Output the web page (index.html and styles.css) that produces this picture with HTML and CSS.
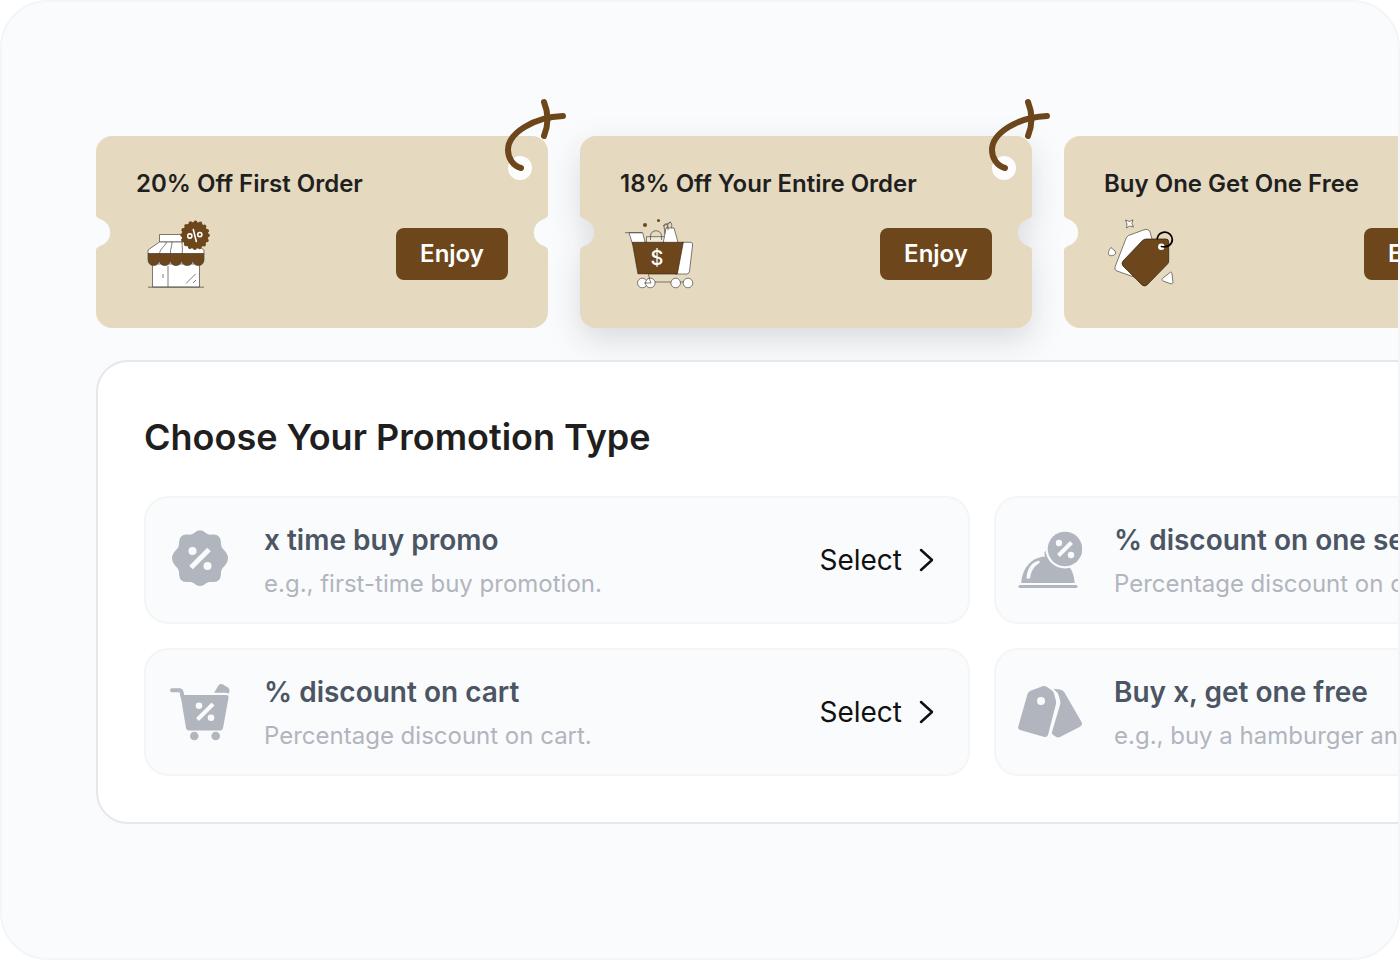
FILE: index.html
```html
<!DOCTYPE html>
<html lang="en">
  <head>
    <meta charset="UTF-8" />
    <title>Promotions</title>
    <link rel="stylesheet" href="styles.css">
  </head>
  <body>
    <!-- shapes shared by all tickets -->
    <svg class="defs" width="0" height="0" aria-hidden="true">
      <symbol id="ticket" viewBox="0 0 452 192">
        <path d="M16 0H436a16 16 0 0 1 16 16V79C452 81 450 82 448 83a14 14 0 0 0 0 27C450 111 452 112 452 114V176a16 16 0 0 1-16 16H16a16 16 0 0 1-16-16V114C0 112 2 111 4 110a14 14 0 0 0 0-27C2 82 0 81 0 79V16A16 16 0 0 1 16 0Z" fill="#e5d9bf" />
      </symbol>
      <symbol id="ribbon" viewBox="0 0 72 84">
        <circle cx="20" cy="72" r="12" fill="#fdfdfd" />
        <g fill="none" stroke="#6d461c" stroke-width="6" stroke-linecap="round">
          <path d="M21 72C13 70 8 62 8 54C8 37 34 21 63 20" />
          <path d="M44 6Q51 23 44 40" />
        </g>
      </symbol>
    </svg>

    <main class="frame">
      <section class="tickets">
        <article class="ticket">
          <svg class="ticket-shape" viewBox="0 0 452 192"><use href="#ticket" /></svg>
          <svg class="ticket-ribbon" viewBox="0 0 72 84"><use href="#ribbon" /></svg>
          <div class="ticket-body">
            <h2>20% Off First Order</h2>
            <div class="ticket-row">
              <svg class="ticket-icon" viewBox="0 0 80 80" fill="#fff" stroke="#4a453c" stroke-width="0.7">
                <path d="M16.5 50H63.5V73H16.5Z" />
                <path d="M32 52V73M12 73.2H68M27 60V64" fill="none" />
                <path d="M50 69.500L59.500 60M57 69L60 66" fill="none" />
                <path d="M23.5 20.500H52V28H23.5Z" />
                <path d="M23.5 28H57L68 36V40H12V36Z" />
                <path d="M30.5 28C29 33 24 34 23.5 40M36 28C36 33 34 35 34.5 40M46 28C46 33 47 35 46 40" fill="none" />
                <path d="M12 39.5H68V46A5.6 5.6 0 0 1 56.8 46A5.6 5.6 0 0 1 45.6 46A5.6 5.6 0 0 1 34.4 46A5.6 5.6 0 0 1 23.2 46A5.6 5.6 0 0 1 12 46Z" fill="#6d461c" />
                <circle cx="59" cy="21.3" r="13.300" fill="#6d461c" stroke="none" />
                <circle cx="59" cy="21.3" r="13" fill="none" stroke="#6d461c" stroke-width="3.6" stroke-linecap="round" stroke-dasharray="0.1 5.005" />
                <g fill="none" stroke="#fff" stroke-width="1.6">
                  <circle cx="53.8" cy="22" r="2.1" />
                  <circle cx="63.8" cy="20.600" r="2.1" />
                  <path d="M57.3 15.500L60.300 27.500" stroke-linecap="round" />
                </g>
              </svg>
              <button type="button" class="btn-enjoy">Enjoy</button>
            </div>
          </div>
        </article>

        <article class="ticket active">
          <svg class="ticket-shape" viewBox="0 0 452 192"><use href="#ticket" /></svg>
          <svg class="ticket-ribbon" viewBox="0 0 72 84"><use href="#ribbon" /></svg>
          <div class="ticket-body">
            <h2>18% Off Your Entire Order</h2>
            <div class="ticket-row">
              <svg class="ticket-icon" viewBox="0 0 80 80" fill="#fff" stroke="#4a453c" stroke-width="0.7">
                <circle cx="25" cy="11" r="2" fill="#6d461c" stroke="none" />
                <circle cx="38.5" cy="6.5" r="1.5" fill="#6d461c" stroke="none" />
                <path d="M26.5 22.7H44.5V30H26.5Z" fill="#efe9dc" />
                <path d="M30.5 26V22C30.5 15 41.5 15 41.5 22V26" fill="none" />
                <path d="M46 14H54L58.5 30H43Z" />
                <path d="M45 20L44 12C44 9 48 9 48 13V16M47 14C48 6 53 7 51.5 14M43 12L51 8" fill="none" />
                <path d="M9 18.7H22.7L25.5 30H12.5Z" />
                <path d="M5 18.7H22" fill="none" />
                <path d="M62 28.3H71Q73 28.5 72.6 31L69.5 57Q69 60 67 60H55Z" />
                <path d="M12.3 28.3H63.3L57.3 60H18Z" fill="#6d461c" stroke="#3d2a14" />
                <path d="M18 60.4L20 64H29L28.3 60.4Z" fill="#ecd5c2" stroke="none" />
                <path d="M28.3 60L30.5 68H68" fill="none" />
                <circle cx="22.3" cy="69" r="4.8" />
                <circle cx="30.3" cy="69" r="4.8" />
                <path d="M24 69H31L29 64" fill="none" />
                <circle cx="55.7" cy="69" r="4.8" />
                <circle cx="68" cy="69" r="4.8" />
                <text class="cart-sign" x="37" y="51" text-anchor="middle" stroke="none">$</text>
              </svg>
              <button type="button" class="btn-enjoy">Enjoy</button>
            </div>
          </div>
        </article>

        <article class="ticket">
          <svg class="ticket-shape" viewBox="0 0 452 192"><use href="#ticket" /></svg>
          <svg class="ticket-ribbon" viewBox="0 0 72 84"><use href="#ribbon" /></svg>
          <div class="ticket-body">
            <h2>Buy One Get One Free</h2>
            <div class="ticket-row">
              <svg class="ticket-icon" viewBox="0 0 80 80" fill="#fff" stroke="#4a453c" stroke-width="0.7" stroke-linejoin="round">
                <path d="M21.5 6L25.5 7.5L29 5.8L27.8 9.5L29.5 13L25.5 12L22.5 14L23 10Z" />
                <path d="M7 33.5C5 36 3.5 39 5 41C7 42.5 11 41.5 11.7 39C11.5 36 8.5 35.5 7 33.5Z" />
                <path d="M66 58.5C67 57.5 68 58.5 68 60L69 68C69 70 67.5 70 66 69.5L59 67C57.5 66 57.8 65 59 64Z" />
                <path d="M24.5 21.5L40 15.8Q44.5 14.5 46 18L50 32L30 63L13 57Q10 56 11 53L21 27Q22 23 24.5 21.5Z" />
                <path d="M42 25H62Q64.7 25 64.7 28V47Q64.7 49 63.5 50L43 71Q40.5 73 38 71L19 52Q17 49.5 19 47L38 27Q40 25 42 25Z" fill="#6d461c" stroke="#2b1c0b" />
                <circle cx="57.3" cy="32.7" r="3.2" stroke="none" />
                <path d="M57.5 32.5C64 34 68.5 30 68.3 25.3A7.6 7.6 0 0 0 53.2 24.5" fill="none" stroke="#000" stroke-width="1.7" stroke-linecap="round" />
              </svg>
              <button type="button" class="btn-enjoy">Enjoy</button>
            </div>
          </div>
        </article>
      </section>

      <section class="panel">
        <h1>Choose Your Promotion Type</h1>
        <div class="promo-grid">
          <div class="promo">
            <svg class="promo-icon" viewBox="0 0 64 64" fill="#b1b5be">
              <path d="M25.500 5.500Q32 -1 38.500 5.500Q40.500 7 44 6.500Q52.500 5.500 53 14.500Q52.500 18 54.500 20.500Q65.500 30.300 54.500 40Q52.500 43 53 46Q52.500 55 44 54Q40.500 53.500 38.500 55Q32 61.500 25.500 55Q23.500 53.500 20 54Q11.500 55 11 46Q11.500 43 9.500 40Q-1.500 30.300 9.500 20.500Q11.500 18 11 14.500Q11.500 5.500 20 6.500Q23.500 7 25.500 5.500Z" />
              <g fill="#fafbfc">
                <circle cx="24.5" cy="23" r="4" />
                <circle cx="39.5" cy="38" r="4" />
                <path d="M23 39.5L41 21.500" stroke="#fafbfc" stroke-width="5" />
              </g>
            </svg>
            <div class="promo-text">
              <h3>x time buy promo</h3>
              <p>e.g., first-time buy promotion.</p>
            </div>
            <button type="button" class="btn-select">
              Select
              <svg viewBox="0 0 40 40"><path d="M15 10L26 20L15 30" /></svg>
            </button>
          </div>

          <div class="promo">
            <svg class="promo-icon" viewBox="0 0 64 64" fill="#b1b5be">
              <path d="M3.3 55C4.500 39 14 29.500 27 28.500Q25.500 24 28 22.500L34 28.500C47 30 56 40 56.700 55Z" />
              <path d="M2 58.500H58" stroke="#b1b5be" stroke-width="3" stroke-linecap="round" />
              <path d="M8.500 50.500C9 41 13 34.500 21 32.500L22 34.500C16 38 13 43 12 50.500Z" fill="#fafbfc" />
              <circle cx="47" cy="21" r="19.500" fill="#fafbfc" />
              <circle cx="47" cy="21" r="17.300" />
              <g fill="#fafbfc">
                <circle cx="41" cy="15" r="3.2" />
                <circle cx="53" cy="27" r="3.2" />
                <path d="M40.500 27.500L53.500 14.500" stroke="#fafbfc" stroke-width="4" />
              </g>
            </svg>
            <div class="promo-text">
              <h3>% discount on one selected item</h3>
              <p>Percentage discount on one item.</p>
            </div>
            <button type="button" class="btn-select">
              Select
              <svg viewBox="0 0 40 40"><path d="M15 10L26 20L15 30" /></svg>
            </button>
          </div>

          <div class="promo">
            <svg class="promo-icon" viewBox="0 0 64 64" fill="#b1b5be">
              <path d="M4 10.3H11.5Q13 10.3 13.5 12L15 18" fill="none" stroke="#b1b5be" stroke-width="4" stroke-linecap="round" />
              <path d="M12.5 15H58Q61 15 60.5 18L55 48Q54.5 50.5 52 50.5H21Q18.500 50.5 18 48Z" />
              <path d="M46 12.8L50.5 5.5Q52 3.5 54.5 4.3L60 7.5Q62 9 61.5 11L60.8 13.5L57 12.8Z" />
              <circle cx="26.3" cy="56" r="4.3" />
              <circle cx="47.7" cy="56" r="4.3" />
              <g fill="#fafbfc">
                <circle cx="31" cy="25.7" r="3.300" />
                <circle cx="43" cy="37.7" r="3.300" />
                <path d="M29.500 39.500L45 24" stroke="#fafbfc" stroke-width="4" />
              </g>
            </svg>
            <div class="promo-text">
              <h3>% discount on cart</h3>
              <p>Percentage discount on cart.</p>
            </div>
            <button type="button" class="btn-select">
              Select
              <svg viewBox="0 0 40 40"><path d="M15 10L26 20L15 30" /></svg>
            </button>
          </div>

          <div class="promo">
            <svg class="promo-icon" viewBox="0 0 64 64" fill="#b1b5be">
              <path d="M12 11L24.5 6.2Q27 5.5 29 7L34 10.5Q35.5 11.5 36 13.5L38 21Q38.3 23 37.7 25L30 55Q29 57.5 26.5 57L2 50Q-0.5 49 0.3 46.5L9.5 14Q10.3 11.8 12 11Z" />
              <circle cx="23" cy="21" r="4" fill="#fafbfc" />
              <path d="M35.5 8.8L42 9.5Q45 10 46.5 12.5L63.5 42Q65 45 62 46.8L42 57Q39.5 58 37.5 56.5L34.5 54.5Q33.5 53.5 34 52L42 25Q42.7 22.5 42 20L40 13.5Z" />
            </svg>
            <div class="promo-text">
              <h3>Buy x, get one free</h3>
              <p>e.g., buy a hamburger and get one.</p>
            </div>
            <button type="button" class="btn-select">
              Select
              <svg viewBox="0 0 40 40"><path d="M15 10L26 20L15 30" /></svg>
            </button>
          </div>
        </div>
      </section>
    </main>
  </body>
</html>
```
FILE: styles.css
```css
* {
  box-sizing: border-box;
}
body {
  margin: 0;
  background: #fff;
  font-family: Inter, "Liberation Sans", sans-serif;
  color: #1f1f1f;
}
h1,
h2,
h3,
p {
  margin: 0;
}
button {
  font-family: inherit;
  border: none;
  cursor: pointer;
}
.defs {
  position: absolute;
}
.frame {
  min-height: 100vh;
  padding: 134px 0 134px 94px;
  border: 2px solid #f3f5f7;
  border-radius: 48px;
  background: #fafbfc;
  overflow: hidden;
}

/* tickets */
.tickets {
  display: flex;
  gap: 32px;
  margin-bottom: 32px;
}
.ticket {
  position: relative;
  display: grid;
  flex: 0 0 452px;
}
.ticket-shape,
.ticket-body {
  grid-area: 1 / 1;
}
.ticket-shape {
  display: block;
  width: 100%;
}
.ticket.active .ticket-shape {
  overflow: visible;
  filter: drop-shadow(0 12px 16px rgba(16, 24, 40, 0.14));
}
.ticket-ribbon {
  position: absolute;
  top: -40px;
  right: -24px;
  width: 72px;
  height: 84px;
}
.ticket-body {
  position: relative;
  padding: 32px 40px;
}
.ticket h2 {
  margin-bottom: 14px;
  font-size: 24px;
  line-height: 32px;
  font-weight: 600;
}
.ticket-row {
  display: flex;
  align-items: center;
  justify-content: space-between;
}
.ticket-icon {
  width: 80px;
  height: 80px;
}
.cart-sign {
  font-size: 20px;
  font-weight: 500;
}
.btn-enjoy {
  width: 112px;
  height: 52px;
  padding: 0 0 2px;
  border-radius: 8px;
  background: #6d461c;
  color: #fff;
  font-size: 24px;
  font-weight: 600;
}

/* promotion types */
.panel {
  position: relative;
  width: max-content;
  padding: 46px;
  border: 2px solid #e5e7eb;
  border-radius: 32px;
  background: #fff;
}
.panel h1 {
  margin-bottom: 30px;
  font-size: 36px;
  line-height: 58px;
  font-weight: 600;
}
.promo-grid {
  display: grid;
  grid-template-columns: 826px 826px;
  gap: 24px;
}
.promo {
  display: flex;
  align-items: center;
  padding: 22px;
  border: 2px solid #f3f5f7;
  border-radius: 24px;
  background: #fafbfc;
}
.promo-icon {
  width: 64px;
  height: 64px;
  margin-right: 32px;
}
.promo-text {
  flex: 1;
}
.promo h3 {
  margin-bottom: 8px;
  color: #4b5563;
  font-size: 28px;
  line-height: 40px;
  font-weight: 600;
}
.promo p {
  color: #b1b5be;
  font-size: 24px;
  line-height: 32px;
}
.btn-select {
  display: flex;
  align-items: center;
  gap: 4px;
  padding: 0;
  background: none;
  color: #111;
  font-size: 28px;
}
.btn-select svg {
  width: 40px;
  height: 40px;
  fill: none;
  stroke: #111;
  stroke-width: 2.5;
  stroke-linecap: round;
  stroke-linejoin: round;
}
```
